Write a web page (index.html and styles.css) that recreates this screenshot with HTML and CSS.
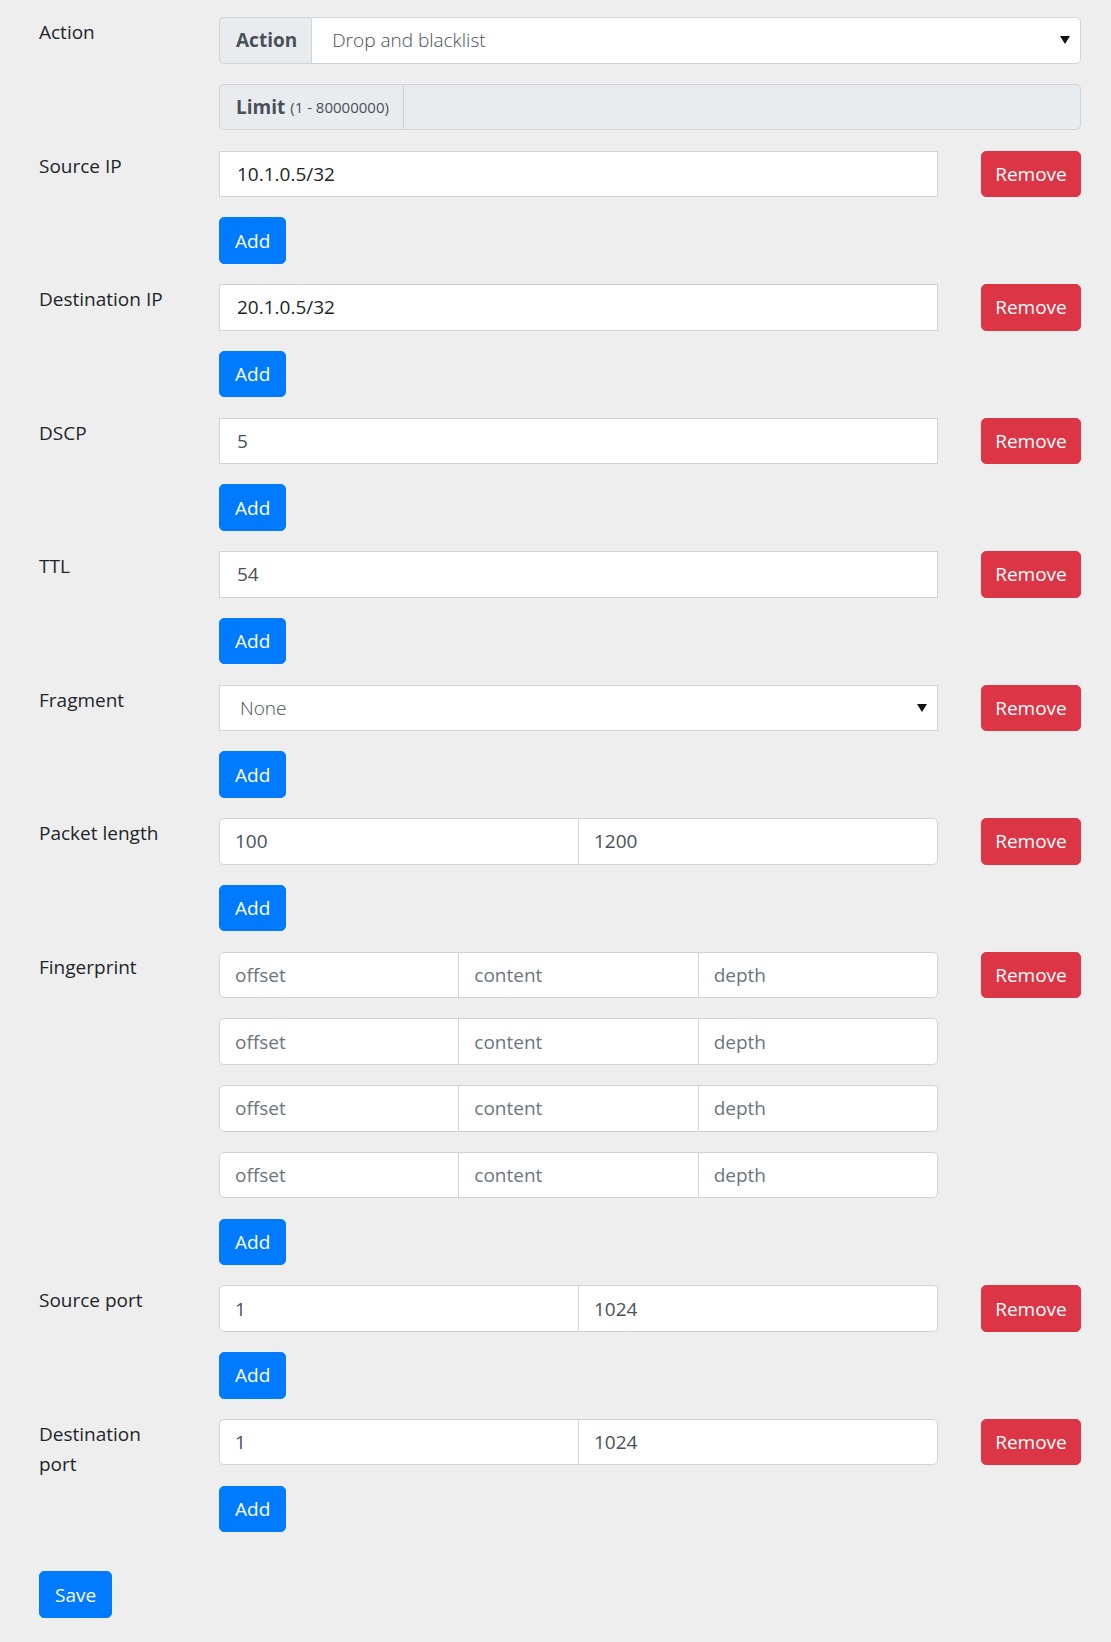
FILE: index.html
```html
<!DOCTYPE html>
<html>
<head>
<meta charset="utf-8">
<link rel="stylesheet" href="styles.css">
</head>
<body>
<form class="form">
  <div class="field">
    <div class="label">Action</div>
    <div class="controls">
      <div class="group">
        <span class="addon"><b>Action</b></span>
        <div class="select select-grouped"><span class="select-text">Drop and blacklist</span><svg class="caret" width="10" height="8" viewBox="0 0 10 8"><path d="M0 0H10L5 8Z" fill="#111"/></svg></div>
      </div>
      <div class="group">
        <span class="addon"><b>Limit</b><small>(1 - 80000000)</small></span>
        <div class="input input-disabled"></div>
      </div>
    </div>
  </div>

  <div class="field">
    <div class="label">Source IP</div>
    <div class="controls">
      <div class="entry">
        <input class="input input-single input-dark" value="10.1.0.5/32">
        <button type="button" class="btn btn-red">Remove</button>
      </div>
      <div class="add-row"><button type="button" class="btn btn-blue">Add</button></div>
    </div>
  </div>

  <div class="field">
    <div class="label">Destination IP</div>
    <div class="controls">
      <div class="entry">
        <input class="input input-single input-dark" value="20.1.0.5/32">
        <button type="button" class="btn btn-red">Remove</button>
      </div>
      <div class="add-row"><button type="button" class="btn btn-blue">Add</button></div>
    </div>
  </div>

  <div class="field">
    <div class="label">DSCP</div>
    <div class="controls">
      <div class="entry">
        <input class="input input-single" value="5">
        <button type="button" class="btn btn-red">Remove</button>
      </div>
      <div class="add-row"><button type="button" class="btn btn-blue">Add</button></div>
    </div>
  </div>

  <div class="field">
    <div class="label">TTL</div>
    <div class="controls">
      <div class="entry">
        <input class="input input-single" value="54">
        <button type="button" class="btn btn-red">Remove</button>
      </div>
      <div class="add-row"><button type="button" class="btn btn-blue">Add</button></div>
    </div>
  </div>

  <div class="field">
    <div class="label">Fragment</div>
    <div class="controls">
      <div class="entry">
        <div class="select select-single"><span class="select-text">None</span><svg class="caret" width="10" height="8" viewBox="0 0 10 8"><path d="M0 0H10L5 8Z" fill="#111"/></svg></div>
        <button type="button" class="btn btn-red">Remove</button>
      </div>
      <div class="add-row"><button type="button" class="btn btn-blue">Add</button></div>
    </div>
  </div>

  <div class="field">
    <div class="label">Packet length</div>
    <div class="controls">
      <div class="entry">
        <div class="group">
          <input class="input" value="100">
          <input class="input" value="1200">
        </div>
        <button type="button" class="btn btn-red">Remove</button>
      </div>
      <div class="add-row"><button type="button" class="btn btn-blue">Add</button></div>
    </div>
  </div>

  <div class="field">
    <div class="label">Fingerprint</div>
    <div class="controls">
      <div class="entry">
        <div class="group">
          <input class="input" placeholder="offset">
          <input class="input" placeholder="content">
          <input class="input" placeholder="depth">
        </div>
        <button type="button" class="btn btn-red">Remove</button>
      </div>
      <div class="entry">
        <div class="group">
          <input class="input" placeholder="offset">
          <input class="input" placeholder="content">
          <input class="input" placeholder="depth">
        </div>
      </div>
      <div class="entry">
        <div class="group">
          <input class="input" placeholder="offset">
          <input class="input" placeholder="content">
          <input class="input" placeholder="depth">
        </div>
      </div>
      <div class="entry">
        <div class="group">
          <input class="input" placeholder="offset">
          <input class="input" placeholder="content">
          <input class="input" placeholder="depth">
        </div>
      </div>
      <div class="add-row"><button type="button" class="btn btn-blue">Add</button></div>
    </div>
  </div>

  <div class="field">
    <div class="label">Source port</div>
    <div class="controls">
      <div class="entry">
        <div class="group">
          <input class="input" value="1">
          <input class="input" value="1024">
        </div>
        <button type="button" class="btn btn-red">Remove</button>
      </div>
      <div class="add-row"><button type="button" class="btn btn-blue">Add</button></div>
    </div>
  </div>

  <div class="field">
    <div class="label">Destination port</div>
    <div class="controls">
      <div class="entry">
        <div class="group">
          <input class="input" value="1">
          <input class="input" value="1024">
        </div>
        <button type="button" class="btn btn-red">Remove</button>
      </div>
      <div class="add-row"><button type="button" class="btn btn-blue">Add</button></div>
    </div>
  </div>

  <div class="save-row"><button type="button" class="btn btn-blue">Save</button></div>
</form>
</body>
</html>
```
FILE: styles.css
```css
html, body {
  margin: 0;
  padding: 0;
  background: #eeeeee;
}
body {
  font-family: "Open Sans", "Noto Sans", "DejaVu Sans", sans-serif;
  font-size: 19px;
  color: #212529;
}
.form {
  display: flex;
  flex-direction: column;
  gap: 20.25px;
  padding: 17px 30px 26px 39px;
  margin: 0;
}
.field {
  display: grid;
  grid-template-columns: 180px 862px;
  align-items: start;
}
.label {
  line-height: 30px;
  padding-top: 0;
  width: 140px;
  color: #212529;
}
.controls {
  display: flex;
  flex-direction: column;
  gap: 20.25px;
}
.entry {
  display: grid;
  grid-template-columns: 719px 100px;
  column-gap: 43px;
}
.group {
  display: flex;
  height: 46.5px;
}
.addon {
  display: flex;
  align-items: center;
  padding: 0 14px 0 16px;
  background: #e9ecef;
  border: 1px solid #ced4da;
  border-right: none;
  border-radius: 5px 0 0 5px;
  color: #495057;
  white-space: nowrap;
  box-sizing: border-box;
}
.addon b {
  font-weight: 700;
}
.addon small {
  font-size: 15px;
  margin-left: 5px;
}
.input {
  flex: 1 1 0;
  min-width: 0;
  height: 46.5px;
  box-sizing: border-box;
  margin: 0;
  padding: 0 15px;
  border: 1px solid #ced4da;
  background: #ffffff;
  font-family: inherit;
  font-size: 19px;
  color: #495057;
  outline: none;
}
.input::placeholder {
  color: #6c757d;
  opacity: 1;
}
.input-dark {
  color: #212529;
}
.input-single {
  border-radius: 0;
  width: 100%;
  padding-left: 17px;
}
.input-disabled {
  background: #e9ecef;
  border-radius: 0 5px 5px 0;
}
.group .input {
  border-radius: 0;
}
.group .input + .input {
  margin-left: -1px;
}
.group .input:first-child {
  border-radius: 5px 0 0 5px;
}
.group .input:last-child {
  border-radius: 0 5px 5px 0;
}
.select {
  display: flex;
  align-items: center;
  height: 46.5px;
  box-sizing: border-box;
  background: #ffffff;
  border: 1px solid #ced4da;
  color: #495057;
  padding: 0 10px 0 20px;
  font-weight: 300;
}
.select-grouped {
  flex: 1 1 0;
  border-radius: 0 5px 5px 0;
}
.select-single {
  border-radius: 0;
  padding-left: 20px;
}
.select-text {
  flex: 1 1 auto;
}
.caret {
  display: block;
  flex: none;
}
.btn {
  height: 46.5px;
  box-sizing: border-box;
  border: 1px solid transparent;
  border-radius: 5px;
  padding: 0 15px;
  font-family: inherit;
  font-size: 19px;
  color: #ffffff;
  cursor: pointer;
  margin: 0;
}
.btn-blue {
  background: #007bff;
  border-color: #007bff;
}
.btn-red {
  background: #dc3545;
  border-color: #dc3545;
  width: 100px;
  padding: 0;
}
.add-row {
  display: flex;
}
.save-row {
  display: flex;
  margin-top: 19px;
}
```
